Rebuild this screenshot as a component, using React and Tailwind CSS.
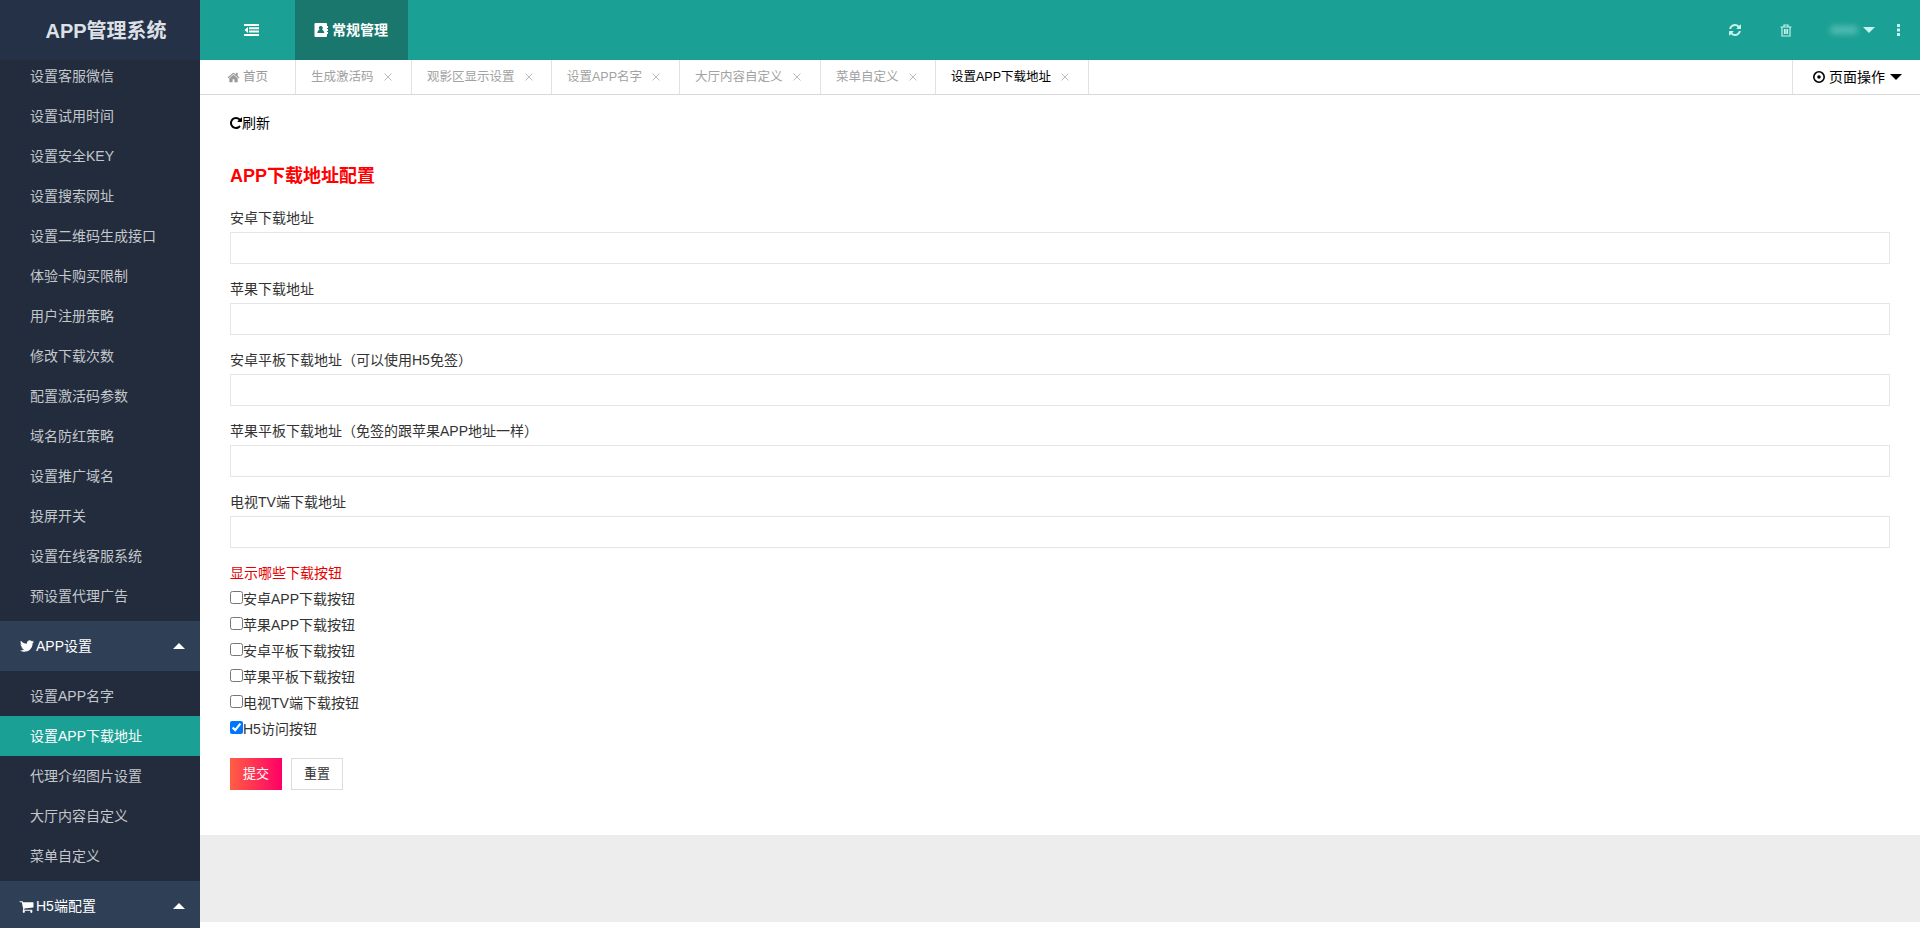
import React from "react";

const font = { fontFamily: '"Liberation Sans", "Noto Sans CJK SC", sans-serif' };

const icons = {
  twitter: "M1684 408q-67 98-162 167 1 14 1 42 0 130-38 259.5t-115.5 248.5-184.5 210.5-258 146-323 54.5q-271 0-496-145 35 4 78 4 225 0 401-138-105-2-188-64.5t-114-159.5q33 5 61 5 43 0 85-11-112-23-185.5-111.5t-73.5-205.5v-4q68 38 146 41-66-44-105-115t-39-154q0-88 44-163 121 149 294.5 238.5t371.5 99.5q-8-38-8-74 0-134 94.5-228.5t228.5-94.5q140 0 236 102 109-21 205-78-37 115-142 178 93-10 186-50z",
  refresh: "M1639 1056q0 5-1 7-64 268-268 434.5t-478 166.5q-146 0-282.5-55t-243.5-157l-129 129q-19 19-45 19t-45-19-19-45v-448q0-26 19-45t45-19h448q26 0 45 19t19 45-19 45l-137 137q71 66 161 102t187 36q134 0 250-65t186-179q11-17 53-117 8-23 30-23h192q13 0 22.5 9.5t9.5 22.5zm25-800v448q0 26-19 45t-45 19h-448q-26 0-45-19t-19-45 19-45l138-138q-148-137-349-137-134 0-250 65t-186 179q-11 17-53 117-8 23-30 23h-199q-13 0-22.5-9.5t-9.5-22.5v-7q65-268 270-434.5t480-166.5q146 0 284 55.5t245 156.5l130-129q19-19 45-19t45 19 19 45z",
  repeat: "M1664 256v448q0 26-19 45t-45 19h-448q-42 0-59-40-17-39 14-69l138-138q-148-137-349-137-104 0-198.5 40.5t-163.5 109.5-109.5 163.5-40.5 198.5 40.5 198.5 109.5 163.5 163.5 109.5 198.5 40.5q119 0 225-52t179-147q7-10 23-12 15 0 25 9l137 138q9 8 9.5 20.5t-7.5 22.5q-109 132-264 204.5t-327 72.5q-156 0-298-61t-245-164-164-245-61-298 61-298 164-245 245-164 298-61q147 0 284.5 55.5t244.5 156.5l130-129q29-31 70-14 39 17 39 59z",
  home: "M1472 992v480q0 26-19 45t-45 19h-384v-384h-256v384h-384q-26 0-45-19t-19-45v-480q0-1 .5-3t.5-3l575-474 575 474q1 2 1 6zm223-69l-62 74q-8 9-21 11h-3q-13 0-21-7l-692-577-692 577q-12 8-24 7-13-2-21-11l-62-74q-8-10-7-23.500t11-21.500l719-599q32-26 76-26t76 26l244 204v-195q0-14 9-23t23-9h192q14 0 23 9t9 23v408l219 182q10 8 11 21.500t-7 23.500z",
  cart: "M704 1536q0 52-38 90t-90 38-90-38-38-90 38-90 90-38 90 38 38 90zm896 0q0 52-38 90t-90 38-90-38-38-90 38-90 90-38 90 38 38 90zm128-1088v512q0 24-16.5 42.5t-40.5 21.5l-1044 122q13 60 13 70 0 16-24 64h920q26 0 45 19t19 45-19 45-45 19h-1024q-26 0-45-19t-19-45q0-11 8-31.5t16-36 21.5-40 15.5-29.5l-177-823h-204q-26 0-45-19t-19-45 19-45 45-19h256q16 0 28.500 6.500t19.500 15.500 13 24.500 8 26 5.500 29.500 4.500 26h1201q26 0 45 19t19 45z",
};

const systemItems = [
  "设置客服微信", "设置试用时间", "设置安全KEY", "设置搜索网址", "设置二维码生成接口",
  "体验卡购买限制", "用户注册策略", "修改下载次数", "配置激活码参数", "域名防红策略",
  "设置推广域名", "投屏开关", "设置在线客服系统", "预设置代理广告",
];
const appItems = ["设置APP名字", "设置APP下载地址", "代理介绍图片设置", "大厅内容自定义", "菜单自定义"];
const tabs = [
  { name: "生成激活码", cls: "w-[116px]" },
  { name: "观影区显示设置", cls: "w-[140px]" },
  { name: "设置APP名字", cls: "w-[128px]" },
  { name: "大厅内容自定义", cls: "w-[141px]" },
  { name: "菜单自定义", cls: "w-[115px]" },
  { name: "设置APP下载地址", cls: "w-[153px]", active: true },
];
const fields = [
  "安卓下载地址", "苹果下载地址", "安卓平板下载地址（可以使用H5免签）",
  "苹果平板下载地址（免签的跟苹果APP地址一样）", "电视TV端下载地址",
];
const checks = ["安卓APP下载按钮", "苹果APP下载按钮", "安卓平板下载按钮", "苹果平板下载按钮", "电视TV端下载按钮", "H5访问按钮"];

function Icon({ name, viewBox = "0 0 1792 1792", className }) {
  return (
    <svg viewBox={viewBox} className={className} fill="currentColor">
      <path d={icons[name]} />
    </svg>
  );
}

function Caret({ up, className = "" }) {
  return (
    <svg viewBox="0 0 12 6" className={`h-1.5 w-3 ${className}`} fill="currentColor">
      <path d={up ? "M0 6 6 0l6 6z" : "M0 0h12L6 6z"} />
    </svg>
  );
}

function MenuItem({ label, active }) {
  return (
    <a className={`block h-10 shrink-0 pl-[30px] text-sm leading-10 ${active ? "bg-[#1aa094] text-white" : "text-[#c4c7cc]"}`}>
      {label}
    </a>
  );
}

function MenuGroup({ icon, label }) {
  return (
    <div className="flex h-[50px] shrink-0 items-center bg-[#2f4056] pl-[19px] pr-[15px] text-sm text-white">
      {icon}
      <span className="flex-1">{label}</span>
      <Caret up />
    </div>
  );
}

function Sidebar() {
  return (
    <aside className="flex w-[200px] shrink-0 flex-col overflow-hidden bg-[#222c3c]">
      <div className="z-10 h-[60px] shrink-0 bg-[#243147] pl-3 text-center text-xl font-bold leading-[62px] text-[#dde0e5]">
        APP管理系统
      </div>
      <nav className="-mt-1 flex min-h-0 flex-1 flex-col overflow-hidden">
        {systemItems.map((t) => <MenuItem key={t} label={t} />)}
        <div className="h-[5px] shrink-0" />
        <MenuGroup icon={<Icon name="twitter" className="mr-px size-4" />} label="APP设置" />
        <div className="flex shrink-0 flex-col py-[5px]">
          {appItems.map((t) => <MenuItem key={t} label={t} active={t === "设置APP下载地址"} />)}
        </div>
        <MenuGroup icon={<Icon name="cart" className="mr-0.5 size-[15px]" />} label="H5端配置" />
      </nav>
    </aside>
  );
}

function Header() {
  return (
    <header className="flex h-[60px] shrink-0 items-center bg-[#1aa094] text-white">
      <div className="flex w-[95px] justify-center pl-[8px]">
        <svg viewBox="0 0 15 12" className="h-3 w-[15px]" fill="currentColor">
          <path d="M0 0h15v2H0zM5 3.300h10v2H5zM5 6.600h10v2H5zM0 10h15v2H0zM4 3v6L.5 6z" />
        </svg>
      </div>
      <div className="flex h-full w-[113px] items-center justify-center bg-[#1a776e] pr-px text-sm font-bold">
        <svg viewBox="0 0 14 14" className="mr-1 size-[14px]" fill="currentColor" fillRule="evenodd">
          <path d="M1.500 0h10.500q1 0 1 1v2h1v2h-1v1h1v2h-1v1h1v2h-1v2q0 1-1 1H1.500Q.5 14 .5 13V1Q.5 0 1.500 0zM6.800 3a2 2 0 0 0-1.200 3.600Q3.600 7.300 3.300 10h7Q10 7.300 8 6.600A2 2 0 0 0 6.800 3z" />
        </svg>
        常规管理
      </div>
      <div className="ml-auto flex items-center pr-[19px] text-[#c5f3ee]">
        <Icon name="refresh" className="size-[14px]" />
        <svg viewBox="0 0 12 13" className="ml-[38px] h-[13px] w-3" fill="none" stroke="currentColor" strokeWidth="1.200">
          <path d="M.5 3h11M4 3V1h4v2M2 3v9h8V3M4.500 5v5M6 5v5M7.500 5v5" />
        </svg>
        <span className="ml-[38px] h-2 w-7 rounded bg-[#8fdcd4]/50 blur-[3px]" />
        <Caret className="ml-[5px] mr-[22px]" />
        <svg viewBox="0 0 4 12" className="h-3 w-1" fill="currentColor">
          <path d="M0 0h3v3H0zM0 4.500h3v3H0zM0 9h3v3H0z" />
        </svg>
      </div>
    </header>
  );
}

function TabBar() {
  return (
    <div className="flex h-[35px] shrink-0 border-b border-[#d9d9d9] bg-white text-[12.5px] leading-[33px]">
      <div className="flex w-24 items-center border-r border-[#e2e2e2] pl-[27px] text-[#999]">
        <Icon name="home" className="mr-[3px] size-[13px]" />
        首页
      </div>
      {tabs.map((t) => (
        <div key={t.name} className={`flex items-center border-r border-[#e2e2e2] pl-[15px] ${t.cls} ${t.active ? "text-black" : "text-[#a2a2a2]"}`}>
          <span>{t.name}</span>
          <svg viewBox="0 0 8 8" className="ml-2.5 size-2" stroke="#bbb" strokeWidth="1">
            <path d="M.5.5l7 7M7.500.5l-7 7" />
          </svg>
        </div>
      ))}
      <div className="ml-auto flex w-32 items-center border-l border-[#e2e2e2] pl-5 text-sm text-black">
        <svg viewBox="0 0 12 12" className="mr-1 size-3" fill="none" stroke="currentColor" strokeWidth="1.600">
          <circle cx="6" cy="6" r="5.200" />
          <circle cx="6" cy="6" r="1.800" fill="currentColor" stroke="none" />
        </svg>
        页面操作
        <Caret className="ml-[5px]" />
      </div>
    </div>
  );
}

function Content() {
  return (
    <main className="h-[740px] shrink-0 bg-white px-[30px] pt-4 text-sm text-[#333]">
      <div className="flex h-6 items-center leading-6 text-black">
        <Icon name="repeat" viewBox="128 128 1536 1536" className="size-3" />
        刷新
      </div>
      <h1 className="mt-[26px] h-[30px] text-lg font-bold leading-[30px] text-[#f00]">APP下载地址配置</h1>
      <div className="pt-[14px]">
        {fields.map((f) => (
          <div key={f} className="h-[71px] pt-px">
            <label className="block h-[26px] leading-6">{f}</label>
            <div className="h-8 border border-[#e6e6e6]" />
          </div>
        ))}
      </div>
      <div className="h-[26px] leading-[26px] text-[#e60000]">显示哪些下载按钮</div>
      {checks.map((c) => (
        <label key={c} className="flex h-[26px] items-center leading-[26px]">
          <input type="checkbox" defaultChecked={c === "H5访问按钮"} className="mb-[3px] size-[13px]" />
          {c}
        </label>
      ))}
      <div className="mt-4 flex gap-[9px]">
        <button className="h-8 w-[52px] bg-linear-to-r/srgb from-[#ff5f43] to-[#ff0066] text-[13px] text-white">提交</button>
        <button className="h-8 w-[52px] border border-[#dcdcdc] text-[13px]">重置</button>
      </div>
    </main>
  );
}

export default function App() {
  return (
    <div className="flex h-[928px] w-full overflow-hidden bg-white" style={font}>
      <Sidebar />
      <div className="flex min-w-0 flex-1 flex-col">
        <Header />
        <TabBar />
        <Content />
        <div className="h-[87px] shrink-0 bg-[#ededed]" />
      </div>
    </div>
  );
}
